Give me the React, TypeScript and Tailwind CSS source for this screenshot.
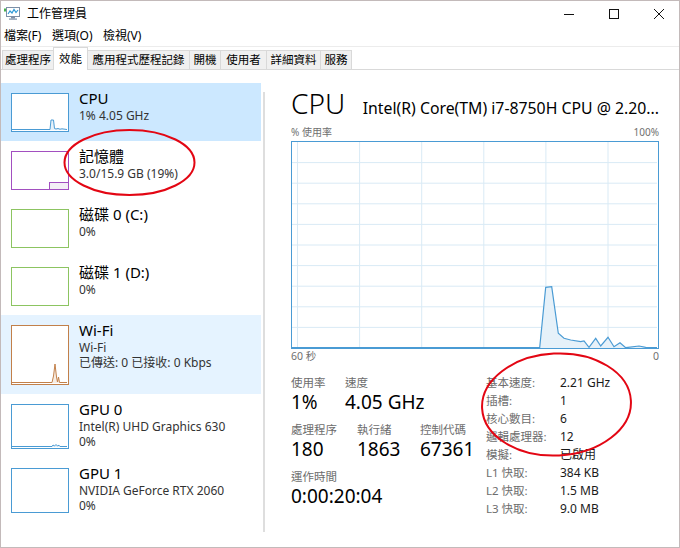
import React from "react";

function AppIcon() {
  return (
    <svg width="17" height="15" viewBox="0 0 17 15" className="shrink-0">
      <rect x="2.5" y="1.5" width="13" height="9" fill="#ffffff" stroke="#7d8fa6" />
      <polyline points="4,8 6,5 8,7 10,3.5 12,6.5 14,4" fill="none" stroke="#2f9ad6" strokeWidth="1.2" />
      <rect x="0" y="2.5" width="2" height="3" fill="#46b04c" />
      <rect x="7" y="11" width="4" height="1.5" fill="#7d8fa6" />
      <rect x="5" y="12.5" width="8" height="1.2" fill="#7d8fa6" />
    </svg>
  );
}

function WinControls() {
  return (
    <div className="ml-auto mr-[15px] flex items-center gap-[35px]">
      <svg width="10" height="10" viewBox="0 0 10 10">
        <line x1="0" y1="5.5" x2="10" y2="5.5" stroke="#111" strokeWidth="1" />
      </svg>
      <svg width="10" height="10" viewBox="0 0 10 10">
        <rect x="0.5" y="0.5" width="9" height="9" fill="none" stroke="#111" strokeWidth="1" />
      </svg>
      <svg width="10" height="10" viewBox="0 0 10 10">
        <line x1="0" y1="0" x2="10" y2="10" stroke="#111" strokeWidth="1" />
        <line x1="10" y1="0" x2="0" y2="10" stroke="#111" strokeWidth="1" />
      </svg>
    </div>
  );
}

type Tab = { label: string; w: string; active?: boolean };

const tabs: Tab[] = [
  { label: "處理程序", w: "w-[52px]" },
  { label: "效能", w: "w-[35px]", active: true },
  { label: "應用程式歷程記錄", w: "w-[102px]" },
  { label: "開機", w: "w-[31px]" },
  { label: "使用者", w: "w-[46px]" },
  { label: "詳細資料", w: "w-[54px]" },
  { label: "服務", w: "w-[31px]" },
];

function Spark({
  points,
  color,
  fill,
  w,
  h,
}: {
  points: string;
  color: string;
  fill: string;
  w: number;
  h: number;
}) {
  return (
    <svg width={w} height={h} viewBox={`0 0 ${w} ${h}`} className="block">
      <polygon points={`0,${h} ${points} ${w},${h}`} fill={fill} />
      <polyline points={points} fill="none" stroke={color} strokeWidth="1" />
    </svg>
  );
}

function Item({
  bg,
  thumbH,
  thumbClass,
  title,
  lines,
  children,
}: {
  bg: string;
  thumbH: string;
  thumbClass: string;
  title: string;
  lines: string[];
  children?: React.ReactNode;
}) {
  return (
    <div className={"flex pt-[6px] pb-[9px] pl-[10px] " + bg}>
      <div className={"mt-[4px] w-[58px] shrink-0 bg-white border-[1.5px] overflow-hidden " + thumbH + " " + thumbClass}>
        {children}
      </div>
      <div className="ml-[10px] flex flex-col">
        <div className="text-[15px] leading-[19px] text-black">{title}</div>
        {lines.map((l) => (
          <div key={l} className="text-[12px] leading-[15px] text-[#333333] whitespace-nowrap">
            {l}
          </div>
        ))}
      </div>
    </div>
  );
}

function MainGraph() {
  const W = 365;
  const H = 206;
  const vx = [5.5, 67.6, 129.7, 191.8, 253.9, 316];
  const hy = [1, 2, 3, 4, 5, 6, 7, 8, 9].map((k) => k * 20.6);
  const pts =
    "0,205.5 247.7,205.5 253.7,145.3 259.7,144.7 266.3,191.3 272,196.3 278.7,198 288.7,199.7 292,199 297,205.3 303.7,196.3 308.7,204 316,195.3 322,204.7 328,200.7 333.7,205.7 347,204 353.7,205.3 365,205.5";
  return (
    <svg width={W} height={H} viewBox={`0 0 ${W} ${H}`} className="block">
      {vx.map((x) => (
        <line key={"v" + x} x1={x} y1="0" x2={x} y2={H} stroke="#d9eaf5" strokeWidth="1" />
      ))}
      {hy.map((y) => (
        <line key={"h" + y} x1="0" y1={y} x2={W} y2={y} stroke="#d9eaf5" strokeWidth="1" />
      ))}
      <polygon points={`${pts} ${W},${H} 0,${H}`} fill="#e6f1f9" />
      <polyline points={pts} fill="none" stroke="#4a9bd4" strokeWidth="1.2" />
    </svg>
  );
}

export default function App() {
  return (
    <div className="relative w-[680px] h-[548px] bg-white border border-[#c3baba] flex flex-col overflow-hidden text-black [font-family:Noto_Sans,Noto_Sans_CJK_TC,sans-serif]">
      {/* Title bar */}
      <div className="h-[25px] shrink-0 flex items-center pl-[3px]">
        <AppIcon />
        <span className="ml-[6px] text-[12px] leading-none text-black">工作管理員</span>
        <WinControls />
      </div>

      {/* Menu bar */}
      <div className="h-[20px] shrink-0 flex items-center pl-[3px] text-[12px] text-black">
        <span className="w-[48px]">檔案(F)</span>
        <span className="w-[51px]">選項(O)</span>
        <span>檢視(V)</span>
      </div>
      <div className="h-[1px] shrink-0 bg-[#ececec]" />

      {/* Tabs */}
      <div className="h-[23px] shrink-0 flex items-end pl-[1px] border-b border-[#d9d9d9]">
        {tabs.map((t, i) =>
          t.active ? (
            <div
              key={t.label}
              className={
                "relative z-10 -mb-[1px] h-[23px] -ml-[1px] flex items-center justify-center bg-white border-l border-t border-r border-[#d9d9d9] text-[11.5px] pb-[1px] " +
                t.w
              }
            >
              {t.label}
            </div>
          ) : (
            <div
              key={t.label}
              className={
                "h-[19px] flex items-center justify-center bg-[#f0f0f0] border-t border-r border-[#d9d9d9] text-[11.5px] whitespace-nowrap " +
                (i === 0 ? "border-l " : "") +
                t.w
              }
            >
              {t.label}
            </div>
          )
        )}
      </div>

      {/* Content */}
      <div className="flex-1 flex">
        {/* Left list */}
        <div className="w-[260px] shrink-0 pt-[13px]">
          <Item bg="bg-[#cce8ff]" thumbH="h-[39px]" thumbClass="border-[#4a9bd4]" title="CPU" lines={["1% 4.05 GHz"]}>
            <Spark
              w={55}
              h={36}
              color="#4a9bd4"
              fill="#e6f1f9"
              points="0,35.5 38,35.5 39,26 41.5,26 42.5,34.5 44,35 46,34.5 48,35.2 50,34.8 55,35.5"
            />
          </Item>
          <Item bg="bg-white" thumbH="h-[39px]" thumbClass="border-[#a24fc0] relative" title="記憶體" lines={["3.0/15.9 GB (19%)"]}>
            <div className="absolute right-0 bottom-0 w-[19px] h-[7px] bg-[#f3eef5] border-l border-t border-[#a24fc0]" />
          </Item>
          <Item bg="bg-white" thumbH="h-[39px]" thumbClass="border-[#8cc461]" title="磁碟 0 (C:)" lines={["0%"]} />
          <Item bg="bg-white" thumbH="h-[39px]" thumbClass="border-[#8cc461]" title="磁碟 1 (D:)" lines={["0%"]} />
          <Item
            bg="bg-[#e5f3ff]"
            thumbH="h-[60px]"
            thumbClass="border-[#c2804a]"
            title="Wi-Fi"
            lines={["Wi-Fi", "已傳送: 0 已接收: 0 Kbps"]}
          >
            <Spark
              w={55}
              h={57}
              color="#c2804a"
              fill="#f7ede4"
              points="0,56.5 40,56.5 41.5,50 43,38 44.5,51 45.5,56 46.5,51 47.5,56.5 55,56.5"
            />
          </Item>
          <Item
            bg="bg-white"
            thumbH="h-[45px]"
            thumbClass="border-[#4a9bd4]"
            title="GPU 0"
            lines={["Intel(R) UHD Graphics 630", "0%"]}
          >
            <Spark
              w={55}
              h={42}
              color="#4a9bd4"
              fill="#e6f1f9"
              points="0,41.5 40,41.5 41,40 42.5,41 44,39.5 45.5,41 47,40.2 48,41.5 55,41.5"
            />
          </Item>
          <Item
            bg="bg-white"
            thumbH="h-[45px]"
            thumbClass="border-[#4a9bd4]"
            title="GPU 1"
            lines={["NVIDIA GeForce RTX 2060", "0%"]}
          />
        </div>

        {/* Scroll track */}
        <div className="ml-[2px] mt-[22px] w-[2px] h-[440px] bg-[#dedede] shrink-0" />

        {/* Right details */}
        <div className="flex-1 pl-[26px] pr-[20px] pt-[16px] flex flex-col">
          <div className="h-[34px] flex items-baseline">
            <span className="text-[28px] leading-[34px] font-light">CPU</span>
            <span className="ml-auto text-[15.8px] leading-[34px] whitespace-nowrap">
              Intel(R) Core(TM) i7-8750H CPU @ 2.20...
            </span>
          </div>
          <div className="h-[21px] pt-[3px] flex items-center justify-between text-[10px] text-[#707070]">
            <span>% 使用率</span>
            <span>100%</span>
          </div>
          <div className="h-[208px] border border-[#4a9bd4]">
            <MainGraph />
          </div>
          <div className="h-[16px] flex items-center justify-between text-[10.5px] text-[#707070]">
            <span>60 秒</span>
            <span>0</span>
          </div>

          <div className="mt-[9px] flex">
            <div className="w-[195px] shrink-0 pt-[1px]">
              <div className="flex text-[11.5px] leading-[16px] text-[#6d6d6d]">
                <span className="w-[54px]">使用率</span>
                <span>速度</span>
              </div>
              <div className="flex text-[19px] leading-[22px] text-black">
                <span className="w-[54px]">1%</span>
                <span>4.05 GHz</span>
              </div>
              <div className="mt-[9px] flex text-[11.5px] leading-[16px] text-[#6d6d6d]">
                <span className="w-[66px]">處理程序</span>
                <span className="w-[63px]">執行緒</span>
                <span>控制代碼</span>
              </div>
              <div className="flex text-[19px] leading-[22px] text-black">
                <span className="w-[66px]">180</span>
                <span className="w-[63px]">1863</span>
                <span>67361</span>
              </div>
              <div className="mt-[9px] text-[11.5px] leading-[16px] text-[#6d6d6d]">運作時間</div>
              <div className="text-[19px] leading-[22px] text-black">0:00:20:04</div>
            </div>
            <div className="grid grid-cols-[74px_1fr] text-[12px] leading-[18px]">
              {[
                ["基本速度:", "2.21 GHz"],
                ["插槽:", "1"],
                ["核心數目:", "6"],
                ["邏輯處理器:", "12"],
                ["模擬:", "已啟用"],
                ["L1 快取:", "384 KB"],
                ["L2 快取:", "1.5 MB"],
                ["L3 快取:", "9.0 MB"],
              ].map(([k, v]) => (
                <React.Fragment key={k}>
                  <span className="text-[11.5px] text-[#6d6d6d] whitespace-nowrap">{k}</span>
                  <span className="text-[#1a1a1a] whitespace-nowrap">{v}</span>
                </React.Fragment>
              ))}
            </div>
          </div>
        </div>
      </div>

      {/* Red annotation ellipses */}
      <svg
        className="absolute left-0 top-0 pointer-events-none"
        width="680"
        height="548"
        viewBox="0 0 680 548"
      >
        <ellipse cx="128.5" cy="161.5" rx="65" ry="32.5" fill="none" stroke="#e30613" strokeWidth="2" />
        <ellipse
          cx="555.5"
          cy="403.5"
          rx="74.5"
          ry="51"
          fill="none"
          stroke="#e30613"
          strokeWidth="2"
          transform="rotate(-3 555.5 403.5)"
        />
      </svg>
    </div>
  );
}
